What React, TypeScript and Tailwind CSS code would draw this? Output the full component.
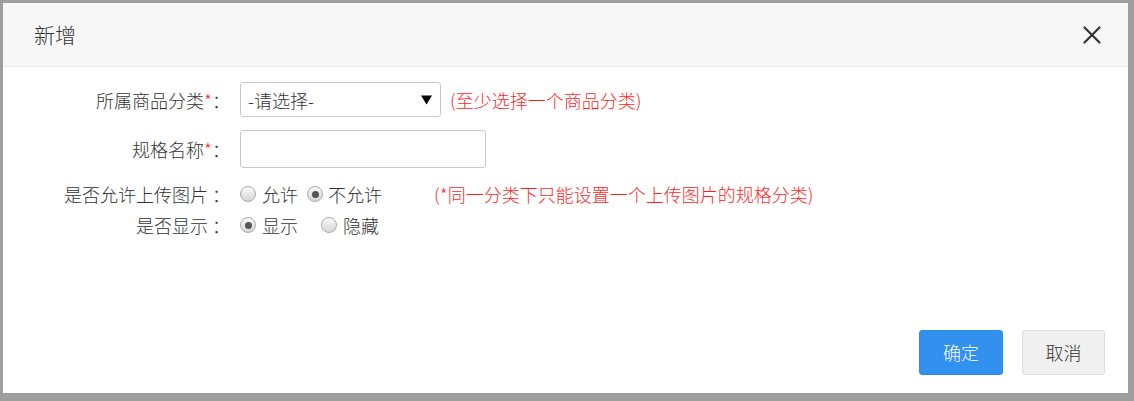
import React from "react";

const font = { fontFamily: '"Noto Sans CJK SC", "Liberation Sans", sans-serif' };

function Radio({ checked }: { checked?: boolean }) {
  return (
    <span className="flex h-[16px] w-[16px] shrink-0 items-center justify-center rounded-full border border-[#a9a9a9] bg-linear-to-b from-[#f9f9f9] to-[#d6d6d6]">
      {checked && <span className="h-[7px] w-[7px] rounded-full bg-[#555]" />}
    </span>
  );
}

function Label({ children }: { children: React.ReactNode }) {
  return (
    <div className="w-[227px] shrink-0 whitespace-nowrap text-right text-[#333]">
      {children}
    </div>
  );
}

const Star = () => <span className="text-[#ff1f1f]">*</span>;

export default function App() {
  return (
    <div
      className="h-[401px] w-[1134px] overflow-hidden bg-[#9e9e9e] pl-[3px] pt-[3px]"
      style={font}
    >
      <div className="flex h-[390px] w-[1125px] flex-col bg-white">
        {/* header */}
        <div className="flex h-[64px] shrink-0 items-center justify-between border-b border-[#e8e8e8] bg-[#f7f7f7] pl-[31px] pr-[27px]">
          <span className="text-[21px] font-light leading-none text-[#333]">新增</span>
          <svg width="18" height="18" viewBox="0 0 18 18">
            <path
              d="M1.5 1.5 L16.5 16.5 M16.5 1.5 L1.5 16.5"
              stroke="#333"
              strokeWidth="2.2"
              strokeLinecap="round"
            />
          </svg>
        </div>

        {/* form */}
        <div className="flex flex-1 flex-col pt-[15px] text-[18px] font-light leading-none">
          <div className="flex h-[35px] items-center">
            <Label>
              所属商品分类
              <Star />：
            </Label>
            <div className="ml-[10px] flex h-[35px] w-[201px] items-center justify-between rounded-[3px] border border-[#c8c8c8] pl-[7px] pr-[8px] text-[#333]">
              <span>-请选择-</span>
              <svg width="11" height="10" viewBox="0 0 11 10">
                <path d="M0 0.5 H11 L5.5 9.5 Z" fill="#000" />
              </svg>
            </div>
            <span className="ml-[9px] text-[#ff1f1f]">(至少选择一个商品分类)</span>
          </div>

          <div className="mt-[13px] flex h-[38px] items-center">
            <Label>
              规格名称
              <Star />：
            </Label>
            <div className="ml-[10px] h-[38px] w-[246px] rounded-[3px] border border-[#c8c8c8]" />
          </div>

          <div className="mt-[13px] flex h-[26px] items-center">
            <Label>是否允许上传图片 ：</Label>
            <div className="ml-[10px] flex items-center text-[#333]">
              <Radio />
              <span className="ml-[6px]">允许</span>
              <span className="ml-[9px]">
                <Radio checked />
              </span>
              <span className="ml-[5px]">不允许</span>
            </div>
            <span className="ml-[52px] text-[#ff1f1f]">
              (*同一分类下只能设置一个上传图片的规格分类)
            </span>
          </div>

          <div className="mt-[5px] flex h-[26px] items-center">
            <Label>是否显示 ：</Label>
            <div className="ml-[10px] flex items-center text-[#333]">
              <Radio checked />
              <span className="ml-[6px]">显示</span>
              <span className="ml-[23px]">
                <Radio />
              </span>
              <span className="ml-[6px]">隐藏</span>
            </div>
          </div>
        </div>

        {/* footer */}
        <div className="flex justify-end gap-[19px] pb-[18px] pr-[23px] text-[18px] font-light">
          <button className="h-[45px] w-[84px] rounded-[3px] border border-[#2f8ae6] bg-[#3290ee] text-white">
            确定
          </button>
          <button className="h-[45px] w-[83px] rounded-[3px] border border-[#dcdcdc] bg-[#f0f0f0] text-[#333]">
            取消
          </button>
        </div>
      </div>
    </div>
  );
}
